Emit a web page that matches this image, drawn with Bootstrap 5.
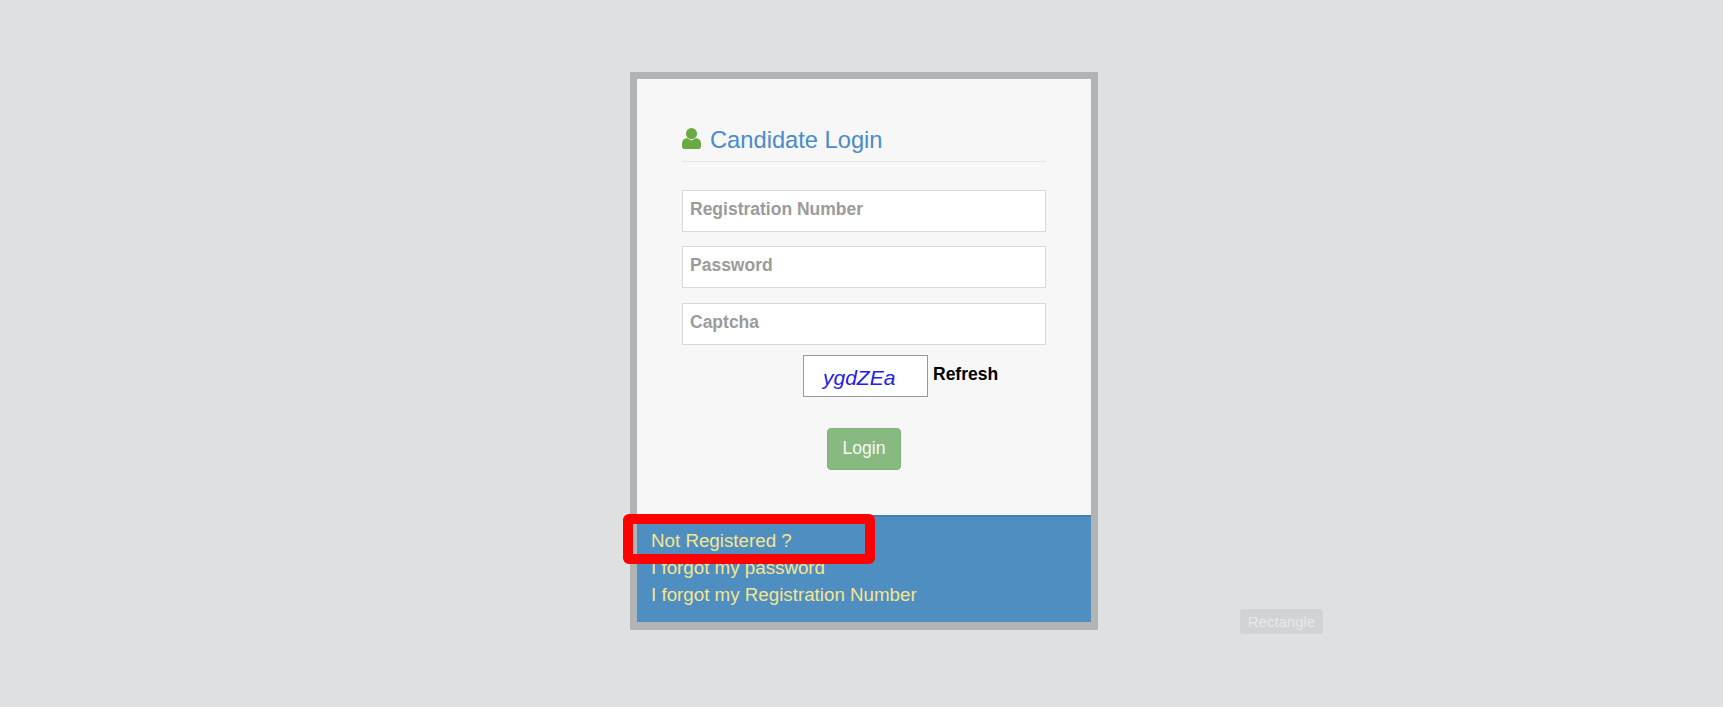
<!DOCTYPE html>
<html lang="en">
<head>
<meta charset="utf-8">
<title>Candidate Login</title>
<link href="https://cdn.jsdelivr.net/npm/bootstrap@5.3.0/dist/css/bootstrap.min.css" rel="stylesheet">
<style>
html,body{height:100%;overflow:hidden}
body{background:#dfe0e2;font-family:"Liberation Sans",Arial,sans-serif;position:relative}
.stage{padding:72px 0 0 5px}
.login-box{position:relative;width:468px;height:558px;border:7px solid #b2b3b5;border-bottom-width:8px;background:#f7f7f7}
.form-zone{height:436px;padding:33px 45px 0 45px}
.login-title{display:flex;align-items:center;gap:9px;height:50px;border-bottom:1px solid #dfe8f0;margin-bottom:28px;color:#4a8cc7;font-size:23.7px;line-height:1;padding-top:5px}
.login-title svg{width:19px;height:21px;flex:none;margin-bottom:2px}
.login-title span{padding-top:4px}
.field{display:block;width:100%;height:42px;border:1px solid #d8d8d8;background:#fff;padding:0 7px 4px;font-weight:700;font-size:17.5px;color:#333;border-radius:0;margin-bottom:14px;outline:none}
.field::placeholder{color:#9b9b9b;opacity:1}
.field-last{margin-top:15px}
.captcha-row{display:flex;margin-left:121px;margin-top:-4px;height:43px}
.captcha-code{width:125px;height:42px;border:1px solid #999;background:#fff;color:#2020e8;font-style:italic;font-size:21px;padding:9px 0 0 19px;line-height:26px}
.captcha-refresh{margin-left:5px;font-weight:700;font-size:17.5px;color:#000;line-height:18px;padding-top:10px;text-decoration:none}
.login-btn{display:block;margin:30px 0 0 145px;width:74px;height:42px;padding:0 0 2px;background:#88b980;border:1px solid #79b573;color:#f4f8f2;font-size:17.6px;border-radius:4px}
.login-btn:hover{background:#88b980;border-color:#79b573;color:#f4f8f2}
.link-zone{height:107px;background:#4f8ec0;border-top:2px solid #4a7cab;padding:10px 14px 0;display:flex;flex-direction:column}
.link-zone a{color:#f6e58f;font-size:18.75px;line-height:27px;text-decoration:none}
.mark-box{position:absolute;left:623px;top:514px;width:252px;height:50px;border:10px solid #ff0000;border-radius:6px}
.shape-tag{position:absolute;left:1240px;top:609px;width:83px;height:25px;background:#d2d3d5;border-radius:3px;color:#e8e9ea;font-size:15px;line-height:25px;text-align:center}
</style>
</head>
<body>
<div class="stage d-flex justify-content-center">
  <div class="login-box">
    <div class="form-zone">
      <div class="login-title">
        <svg viewBox="0 0 19 21" aria-hidden="true"><circle cx="9.5" cy="5.6" r="5.6" fill="#6aaa45"/><path d="M5 10 9.5 12.6 14 10C17 10.6 19 12.4 19 15.2v3.2c0 1.4-1 2.6-2.6 2.6H2.6C1 21 0 19.8 0 18.4v-3.2C0 12.4 2 10.6 5 10z" fill="#6aaa45"/></svg>
        <span>Candidate Login</span>
      </div>
      <input class="field" type="text" placeholder="Registration Number">
      <input class="field" type="password" placeholder="Password">
      <input class="field field-last" type="text" placeholder="Captcha">
      <div class="captcha-row">
        <div class="captcha-code">ygdZEa</div>
        <a class="captcha-refresh" href="#">Refresh</a>
      </div>
      <button class="btn login-btn" type="button">Login</button>
    </div>
    <div class="link-zone">
      <a href="#">Not Registered ?</a>
      <a href="#">I forgot my password</a>
      <a href="#">I forgot my Registration Number</a>
    </div>
  </div>
</div>
<div class="mark-box"></div>
<div class="shape-tag">Rectangle</div>
<script src="https://cdn.jsdelivr.net/npm/bootstrap@5.3.0/dist/js/bootstrap.bundle.min.js"></script>
</body>
</html>
